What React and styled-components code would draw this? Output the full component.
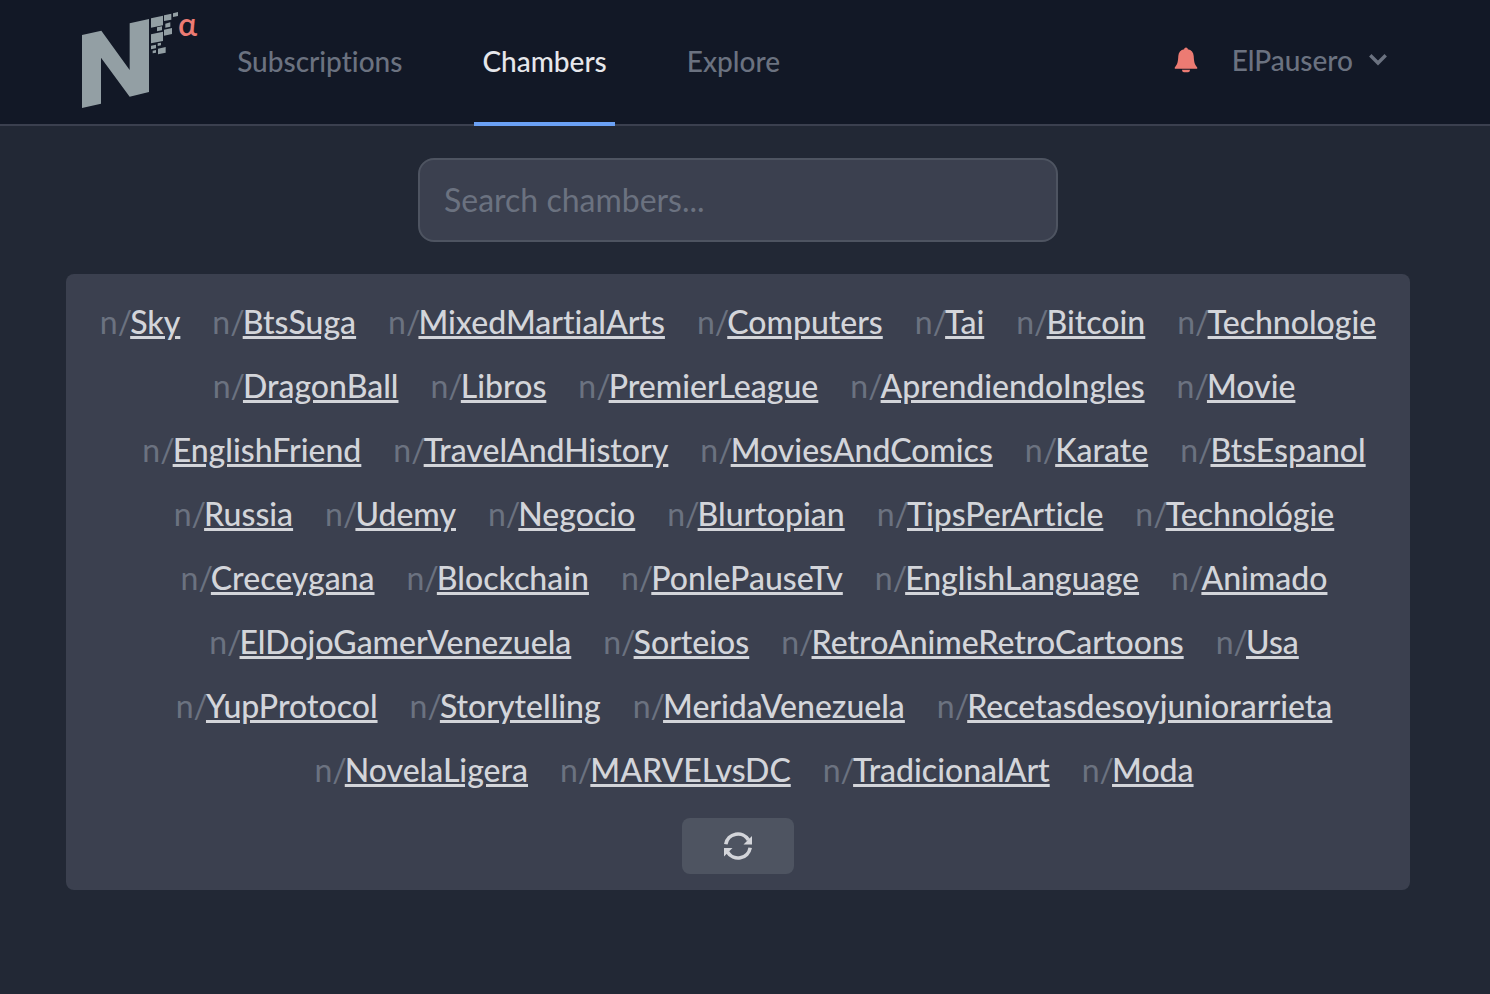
import React, { useState } from 'react';
import styled, { createGlobalStyle, ThemeProvider } from 'styled-components';

const theme = {
  colors: {
    header: '#121826',
    page: '#222835',
    panel: '#3b404f',
    button: '#4e5461',
    line: '#3b404f',
    muted: '#6b7280',
    text: '#d3d5da',
    bright: '#e6e7eb',
    accent: '#6ba1f5',
    alert: '#ec7b73',
    logo: '#939fa4',
  },
};

const chambers = [
  'Sky', 'BtsSuga', 'MixedMartialArts', 'Computers', 'Tai', 'Bitcoin', 'Technologie',
  'DragonBall', 'Libros', 'PremierLeague', 'AprendiendoIngles', 'Movie',
  'EnglishFriend', 'TravelAndHistory', 'MoviesAndComics', 'Karate', 'BtsEspanol',
  'Russia', 'Udemy', 'Negocio', 'Blurtopian', 'TipsPerArticle', 'Technológie',
  'Creceygana', 'Blockchain', 'PonlePauseTv', 'EnglishLanguage', 'Animado',
  'ElDojoGamerVenezuela', 'Sorteios', 'RetroAnimeRetroCartoons', 'Usa',
  'YupProtocol', 'Storytelling', 'MeridaVenezuela', 'Recetasdesoyjuniorarrieta',
  'NovelaLigera', 'MARVELvsDC', 'TradicionalArt', 'Moda',
];

const tabs = ['Subscriptions', 'Chambers', 'Explore'];

const LogoMark = () => (
  <svg width='96' height='96' viewBox='36 36 288 288' fill='currentColor' aria-hidden='true'>
    <path d='M36 105 L94 92 L179 210 V70 L237 57 V276 L179 290 L93 173 V311 L36 324 Z' />
    <path d='M243 55 L279 47 V76 L243 83 Z' />
    <path d='M282 46 L304 41 V59 L282 63 Z' />
    <path d='M309 40 L324 36 V48 L309 51 Z' />
    <path d='M286 71 L301 67 V80 L286 83 Z' />
    <path d='M261 82 L276 79 V91 L261 94 Z' />
    <path d='M282 89 L306 84 V102 L282 107 Z' />
    <path d='M243 103 L279 95 V123 L243 130 Z' />
    <path d='M263 130 L273 128 V136 L263 138 Z' />
    <path d='M243 137 L258 134 V145 L243 148 Z' />
    <path d='M248 152 L258 150 V158 L248 160 Z' />
    <path d='M264 146 L287 141 V158 L264 163 Z' />
  </svg>
);

const BellIcon = () => (
  <svg width='24' height='26' viewBox='0 0 24 26' fill='currentColor' aria-hidden='true'>
    <path d='M12 .5 C11 .5 10.300 1.200 10.200 2.300 C6.500 3 4.600 5.500 4.300 9 C4 14.500 3.500 17.500 .8 20.200 V21.800 H23.200 V20.200 C20.500 17.500 20 14.500 19.700 9 C19.400 5.500 17.500 3 13.800 2.300 C13.700 1.200 13 .5 12 .5 Z' />
    <path d='M8 22.800 H16 C16 24.500 15 25.300 14 25.300 H10 C9 25.300 8 24.500 8 22.800 Z' />
  </svg>
);

const ChevronIcon = () => (
  <svg width='18' height='12' viewBox='0 0 18 12' fill='none' stroke='currentColor' strokeWidth='3.4' aria-hidden='true'>
    <path d='M2.500 2.500 L9 9 L15.500 2.500' strokeLinecap='square' />
  </svg>
);

const RefreshIcon = () => (
  <svg width='28' height='28' viewBox='0 0 28 28' fill='none' stroke='currentColor' strokeWidth='3.6' aria-hidden='true'>
    <path d='M1.800 12.200 A12.300 12.300 0 0 1 24.500 8' />
    <path d='M26.200 15.800 A12.300 12.300 0 0 1 3.500 20' />
    <path d='M28 4 V12.500 H19.500 Z' fill='currentColor' stroke='none' />
    <path d='M0 24.500 V16 H8.500 Z' fill='currentColor' stroke='none' />
  </svg>
);

const App = () => {
  const [active, setActive] = useState('Chambers');
  const [search, setSearch] = useState('');

  return (
    <ThemeProvider theme={theme}>
      <GlobalStyle />
      <Header>
        <Logo href='#' aria-label='Home'>
          <LogoMark />
          <Alpha>α</Alpha>
        </Logo>
        <Nav>
          {tabs.map((tab) => (
            <NavLink
              key={tab}
              href={`#${tab}`}
              $active={tab === active}
              onClick={() => setActive(tab)}
            >
              {tab}
            </NavLink>
          ))}
        </Nav>
        <UserArea>
          <BellButton aria-label='Notifications'>
            <BellIcon />
          </BellButton>
          <UserButton>
            ElPausero
            <ChevronIcon />
          </UserButton>
        </UserArea>
      </Header>
      <Main>
        <SearchInput
          type='text'
          aria-label='Search chambers'
          placeholder='Search chambers...'
          value={search}
          onChange={(e) => setSearch(e.target.value)}
        />
        <Panel>
          <ChamberList>
            {chambers.map((name) => (
              <Chamber key={name}>
                n/<ChamberLink href={`#n/${name}`}>{name}</ChamberLink>
              </Chamber>
            ))}
          </ChamberList>
          <RefreshButton aria-label='Refresh'>
            <RefreshIcon />
          </RefreshButton>
        </Panel>
      </Main>
    </ThemeProvider>
  );
};
export default App;

const GlobalStyle = createGlobalStyle`
  * {
    box-sizing: border-box;
  }
  body {
    margin: 0;
    background-color: ${({ theme }) => theme.colors.page};
    color: ${({ theme }) => theme.colors.muted};
    font-family: Lato, sans-serif;
    font-size: 32px;
    font-variant-ligatures: none;
    line-height: 48px;
  }
  button, input {
    font: inherit;
    color: inherit;
  }
  button {
    padding: 0;
    border: 0;
    background: none;
    cursor: pointer;
  }
`;

const Header = styled.header`
  display: flex;
  height: 126px;
  padding: 0 103px 0 82px;
  border-bottom: 2px solid ${({ theme }) => theme.colors.line};
  background-color: ${({ theme }) => theme.colors.header};
  font-size: 28px;
  font-weight: 500;
`;

const Logo = styled.a`
  display: flex;
  align-items: flex-start;
  padding-top: 12px;
  color: ${({ theme }) => theme.colors.logo};
  text-decoration: none;
`;

const Alpha = styled.span`
  color: ${({ theme }) => theme.colors.alert};
  font-size: 32px;
  font-weight: 600;
  line-height: 24px;
`;

const Nav = styled.nav`
  display: flex;
  gap: 64px;
  height: 126px;
  margin-left: 32px;
`;

const NavLink = styled.a`
  display: flex;
  align-items: center;
  padding: 0 8px;
  border-bottom: 4px solid ${({ $active, theme }) => ($active ? theme.colors.accent : 'transparent')};
  color: ${({ $active, theme }) => ($active ? theme.colors.bright : 'inherit')};
  text-decoration: none;
`;

const UserArea = styled.div`
  display: flex;
  align-items: center;
  gap: 34px;
  height: 120px;
  margin-left: auto;
`;

const BellButton = styled.button`
  display: flex;
  color: ${({ theme }) => theme.colors.alert};
`;

const UserButton = styled.button`
  display: flex;
  align-items: center;
  gap: 16px;
`;

const Main = styled.main`
  display: flex;
  flex-direction: column;
  align-items: center;
  gap: 32px;
  padding: 32px 80px 32px 66px;
`;

const SearchInput = styled.input`
  width: 100%;
  max-width: 640px;
  height: 84px;
  padding: 0 24px 2px;
  border: 2px solid ${({ theme }) => theme.colors.button};
  border-radius: 16px;
  background-color: ${({ theme }) => theme.colors.panel};
  &::placeholder {
    color: ${({ theme }) => theme.colors.muted};
    opacity: 1;
  }
`;

const Panel = styled.section`
  display: flex;
  flex-direction: column;
  align-items: center;
  gap: 16px;
  width: 100%;
  padding: 16px;
  border-radius: 8px;
  background-color: ${({ theme }) => theme.colors.panel};
`;

const ChamberList = styled.ul`
  display: flex;
  flex-wrap: wrap;
  justify-content: center;
  margin: 0;
  padding: 0;
  list-style: none;
`;

const Chamber = styled.li`
  line-height: 64px;
  & + & {
    margin-left: 32px;
  }
`;

/* tucks the name against the slash */
const ChamberLink = styled.a`
  margin-left: -2px;
  color: ${({ theme }) => theme.colors.text};
  font-weight: 500;
`;

const RefreshButton = styled.button`
  display: flex;
  align-items: center;
  justify-content: center;
  width: 112px;
  height: 56px;
  border-radius: 8px;
  background-color: ${({ theme }) => theme.colors.button};
  color: ${({ theme }) => theme.colors.text};
`;
